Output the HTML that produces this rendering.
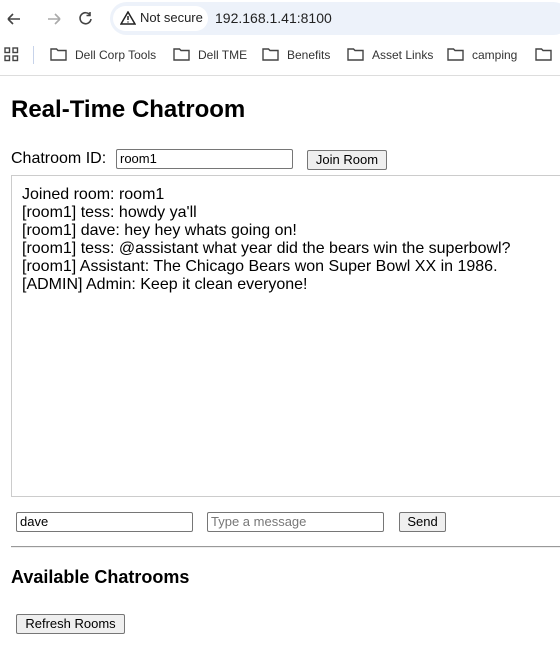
<!DOCTYPE html>
<html><head><style>
*{margin:0;padding:0;box-sizing:border-box}
body{width:560px;height:657px;overflow:hidden;background:#fff;font-family:"Liberation Sans",Arial,sans-serif;position:relative;color:#000}
.a{position:absolute;white-space:nowrap}
.inp{position:absolute;border:1px solid #767676;border-radius:2px;height:20px;font-size:13px;padding:2px 3px;line-height:14px;background:#fff}
.btn{position:absolute;border:1px solid #767676;border-radius:2px;height:20px;font-size:13px;background:#efefef;text-align:center;line-height:18px}
.bm{position:absolute;top:47px;font-size:12px;color:#333;white-space:nowrap}
.bm svg{vertical-align:-2px;margin-right:8px}
</style></head><body>
<div class="a" style="left:0;top:0;width:560px;height:76px;background:#fff;border-bottom:1px solid #ddd"></div>
<svg class="a" style="left:6px;top:10px" width="90" height="18" viewBox="0 0 90 18">
<path d="M2 9H14M2 9L7 4M2 9L7 14" stroke="#444" stroke-width="1.6" fill="none"/>
<path d="M42 9H54M54 9L49 4M54 9L49 14" stroke="#aaa" stroke-width="1.6" fill="none"/>
<path d="M84 5A5.5 5.5 0 1 0 85 9M84 2V5.5H80.5" stroke="#444" stroke-width="1.6" fill="none"/>
</svg>
<div class="a" style="left:110px;top:2px;width:460px;height:33px;background:#edf2fa;border-radius:17px"></div>
<div class="a" style="left:113px;top:6px;width:95px;height:25px;background:#fff;border-radius:13px"></div>
<svg class="a" style="left:120px;top:11px" width="16" height="14" viewBox="0 0 16 14"><path d="M8 1L15 13H1Z" stroke="#222" stroke-width="1.5" fill="none"/><path d="M8 5V9M8 10.5V11.5" stroke="#222" stroke-width="1.5"/></svg>
<div class="a" style="left:140px;top:10px;font-size:13px;color:#222">Not secure</div>
<div class="a" style="left:215px;top:10px;font-size:14px;color:#222">192.168.1.41:8100</div>
<svg class="a" style="left:4px;top:47px" width="15" height="15" viewBox="0 0 15 15"><g fill="none" stroke="#444" stroke-width="1.4"><rect x="1" y="1" width="4.5" height="4.5"/><rect x="9" y="1" width="4.5" height="4.5"/><rect x="1" y="9" width="4.5" height="4.5"/><rect x="9" y="9" width="4.5" height="4.5"/></g></svg>
<div class="a" style="left:33px;top:46px;width:1px;height:18px;background:#c7d3ea"></div>
<div class="bm" style="left:50px"><svg width="17" height="14" viewBox="0 0 17 14"><path d="M1 2H6.5L8 3.5H16V13H1Z" fill="none" stroke="#444" stroke-width="1.4"/></svg>Dell Corp Tools</div>
<div class="bm" style="left:173px"><svg width="17" height="14" viewBox="0 0 17 14"><path d="M1 2H6.5L8 3.5H16V13H1Z" fill="none" stroke="#444" stroke-width="1.4"/></svg>Dell TME</div>
<div class="bm" style="left:262px"><svg width="17" height="14" viewBox="0 0 17 14"><path d="M1 2H6.5L8 3.5H16V13H1Z" fill="none" stroke="#444" stroke-width="1.4"/></svg>Benefits</div>
<div class="bm" style="left:347px"><svg width="17" height="14" viewBox="0 0 17 14"><path d="M1 2H6.5L8 3.5H16V13H1Z" fill="none" stroke="#444" stroke-width="1.4"/></svg>Asset Links</div>
<div class="bm" style="left:447px"><svg width="17" height="14" viewBox="0 0 17 14"><path d="M1 2H6.5L8 3.5H16V13H1Z" fill="none" stroke="#444" stroke-width="1.4"/></svg>camping</div>
<div class="bm" style="left:535px"><svg width="17" height="14" viewBox="0 0 17 14"><path d="M1 2H6.5L8 3.5H16V13H1Z" fill="none" stroke="#444" stroke-width="1.4"/></svg></div>

<div class="a" style="left:11px;top:96px;font-size:24px;font-weight:bold">Real-Time Chatroom</div>
<div class="a" style="left:11px;top:150px;font-size:16px">Chatroom ID:</div>
<div class="inp" style="left:116px;top:149px;width:177px">room1</div>
<div class="btn" style="left:307px;top:150px;width:80px">Join Room</div>
<div class="a" style="left:11px;top:175px;width:560px;height:322px;border:1px solid #ccc"></div>
<div class="a" style="left:22px;top:186px;font-size:16px;line-height:18px">Joined room: room1<br>[room1] tess: howdy ya'll<br>[room1] dave: hey hey whats going on!<br>[room1] tess: @assistant what year did the bears win the superbowl?<br>[room1] Assistant: The Chicago Bears won Super Bowl XX in 1986.<br>[ADMIN] Admin: Keep it clean everyone!</div>
<div class="inp" style="left:16px;top:512px;width:177px">dave</div>
<div class="inp" style="left:207px;top:512px;width:177px;color:#777">Type a message</div>
<div class="btn" style="left:399px;top:512px;width:47px">Send</div>
<div class="a" style="left:11px;top:546px;width:560px;height:2px;border-top:1px solid #999;border-bottom:1px solid #eee"></div>
<div class="a" style="left:11px;top:567px;font-size:18px;font-weight:bold">Available Chatrooms</div>
<div class="btn" style="left:16px;top:614px;width:109px">Refresh Rooms</div>
</body></html>
